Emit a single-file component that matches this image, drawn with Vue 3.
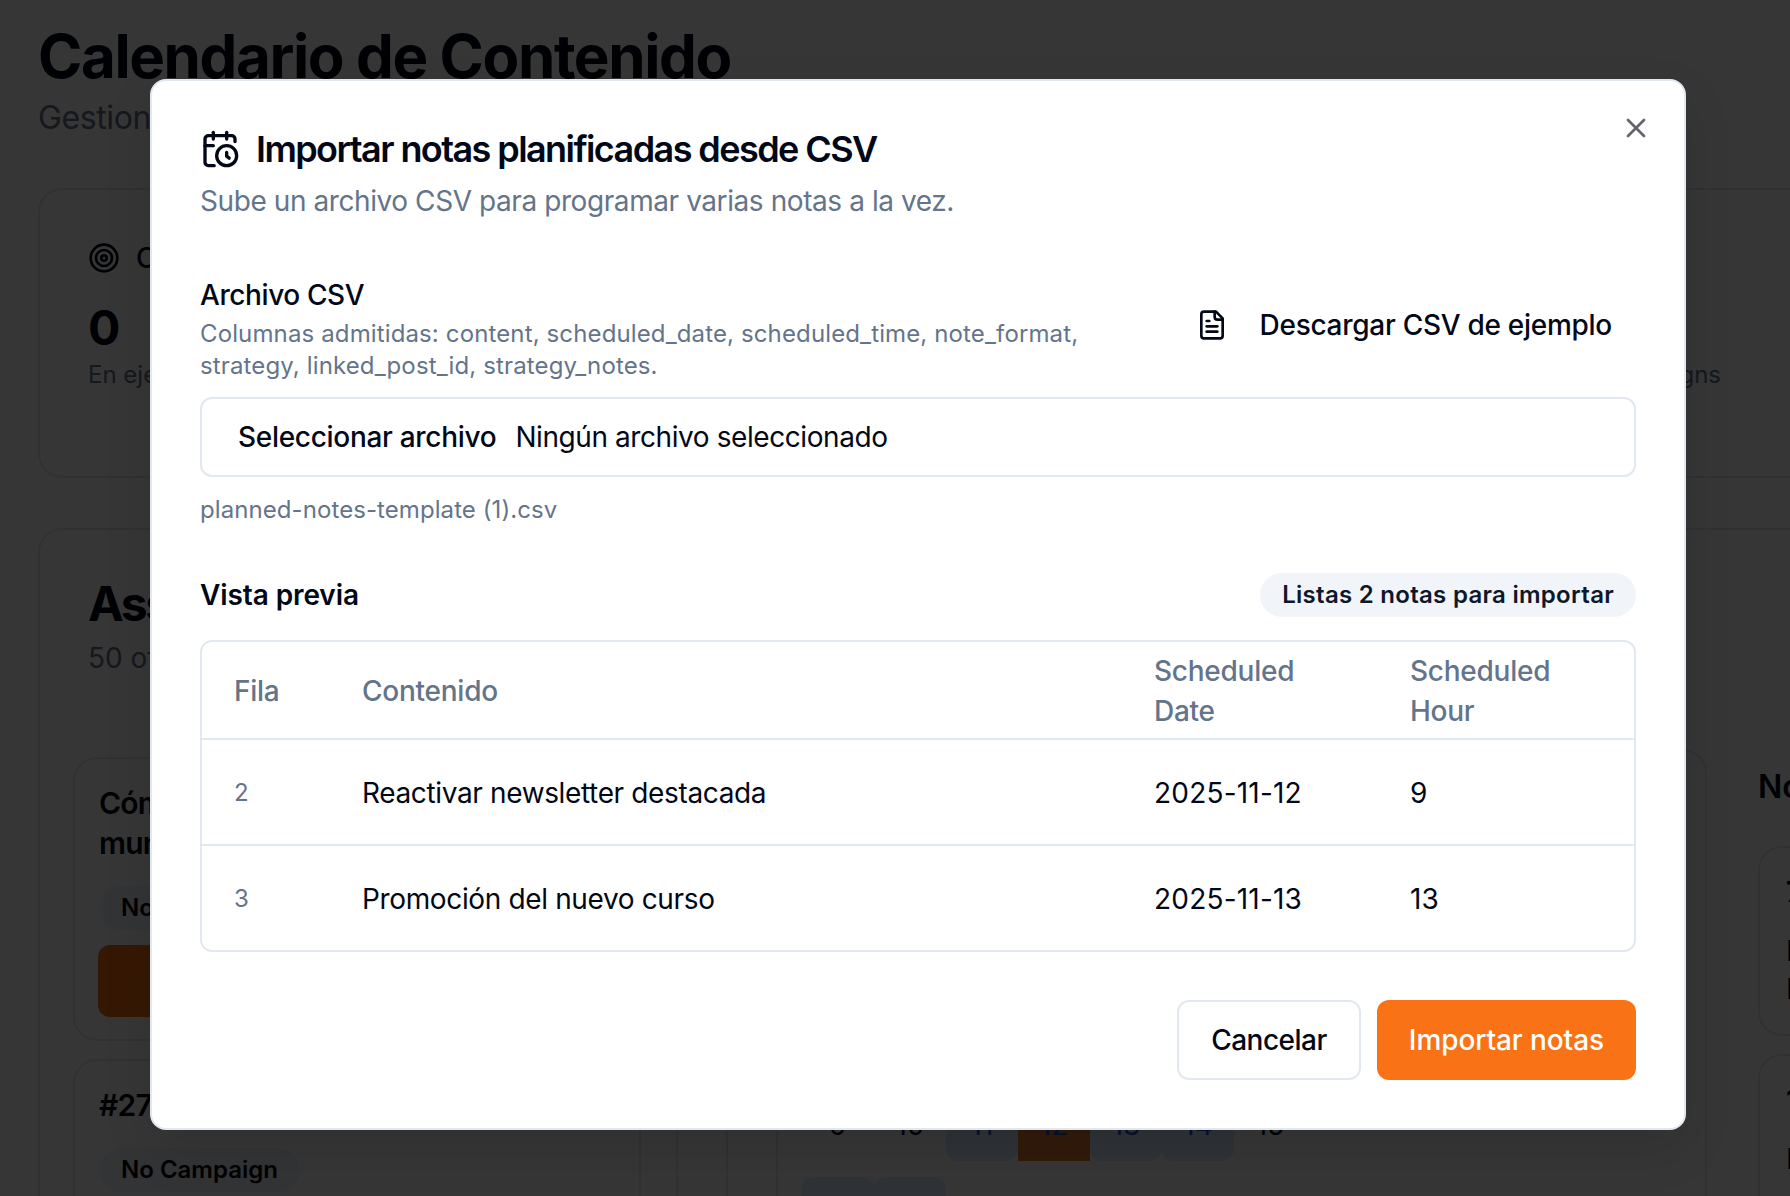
<template>
<div class="page">
  <main class="bg">
    <h1 class="page-title">Calendario de Contenido</h1>
    <p class="page-sub">Gestiona tu calendario de publicaciones y notas planificadas</p>

    <section class="stats">
      <div class="stat">
        <div class="stat-head">
          <svg class="stat-icon" viewBox="0 0 24 24" fill="none" stroke="currentColor" stroke-width="2">
            <circle cx="12" cy="12" r="10"/>
            <circle cx="12" cy="12" r="6"/>
            <circle cx="12" cy="12" r="2"/>
          </svg>
          <span>Campañas activas</span>
        </div>
        <div class="stat-num">0</div>
        <div class="stat-note">En ejecución</div>
      </div>
      <div class="stat stat-last">
        <div class="stat-note">Across all campaigns</div>
      </div>
    </section>

    <section class="assets">
      <h2 class="assets-title">Assignments</h2>
      <p class="assets-sub">50 of 50 posts</p>

      <div class="assets-body">
        <div class="post-list">
          <article class="post">
            <h3>Cómo escribir para un<br>mundo nuevo</h3>
            <span class="pill">No Campaign</span>
            <div class="post-btn"></div>
          </article>
          <article class="post">
            <h3>#27 Newsletter</h3>
            <span class="pill">No Campaign</span>
          </article>
        </div>

        <div class="rail">
          <div class="rail-inner">
            <div class="calendar">
              <div class="days">
                <div
                  v-for="d in days"
                  :key="d.n"
                  class="day"
                  :class="d.kind">{{d.n}}</div>
              </div>
            </div>
          </div>
        </div>

        <div class="notes">
          <h3 class="notes-title">Notas</h3>
          <div class="note">
            <b>7</b>
            <p>Hoy<br>Hora</p>
          </div>
          <div class="note">
            <b>1</b>
            <p>En</p>
          </div>
        </div>
      </div>
    </section>
  </main>

  <div class="overlay"></div>

  <div class="modal">
    <button class="close" aria-label="Cerrar">
      <svg viewBox="0 0 24 24" fill="none" stroke="currentColor" stroke-width="2" stroke-linecap="round" stroke-linejoin="round">
        <path d="M18 6 6 18"/>
        <path d="m6 6 12 12"/>
      </svg>
    </button>

    <header class="modal-head">
      <h2 class="modal-title">
        <svg class="title-icon" viewBox="0 0 24 24" fill="none" stroke="currentColor" stroke-width="2" stroke-linecap="round" stroke-linejoin="round">
          <path d="M21 7.5V6a2 2 0 0 0-2-2H5a2 2 0 0 0-2 2v14a2 2 0 0 0 2 2h3.5"/>
          <path d="M16 2v4"/>
          <path d="M8 2v4"/>
          <path d="M3 10h5"/>
          <path d="M17.5 17.5 16 16.3V14"/>
          <circle cx="16" cy="16" r="6"/>
        </svg>
        Importar notas planificadas desde CSV
      </h2>
      <p class="modal-sub">Sube un archivo CSV para programar varias notas a la vez.</p>
    </header>

    <div class="file-row">
      <div class="file-info">
        <label class="file-label">Archivo CSV</label>
        <p class="file-help">Columnas admitidas: content, scheduled_date, scheduled_time, note_format, strategy, linked_post_id, strategy_notes.</p>
      </div>
      <button class="download">
        <svg class="file-icon" viewBox="0 0 24 24" fill="none" stroke="currentColor" stroke-width="2" stroke-linecap="round" stroke-linejoin="round">
          <path d="M15 2H6a2 2 0 0 0-2 2v16a2 2 0 0 0 2 2h12a2 2 0 0 0 2-2V7Z"/>
          <path d="M14 2v4a2 2 0 0 0 2 2h4"/>
          <path d="M10 9H8"/>
          <path d="M16 13H8"/>
          <path d="M16 17H8"/>
        </svg>
        Descargar CSV de ejemplo
      </button>
    </div>

    <div class="file-input">
      <span class="file-btn">Seleccionar archivo</span>
      <span class="file-none">Ningún archivo seleccionado</span>
    </div>
    <p class="file-name">planned-notes-template (1).csv</p>

    <div class="preview-head">
      <h3>Vista previa</h3>
      <span class="badge">Listas 2 notas para importar</span>
    </div>

    <div class="table-wrap">
      <table>
        <colgroup>
          <col style="width: 128px">
          <col>
          <col style="width: 256px">
          <col style="width: 256px">
        </colgroup>
        <thead>
          <tr>
            <th>Fila</th>
            <th>Contenido</th>
            <th>Scheduled Date</th>
            <th>Scheduled Hour</th>
          </tr>
        </thead>
        <tbody>
          <tr v-for="r in rows" :key="r.row">
            <td class="row-num">{{r.row}}</td>
            <td class="row-text">{{r.content}}</td>
            <td>{{r.date}}</td>
            <td>{{r.hour}}</td>
          </tr>
        </tbody>
      </table>
    </div>

    <footer class="modal-foot">
      <button class="btn btn-outline">Cancelar</button>
      <button class="btn btn-primary">Importar notas</button>
    </footer>
  </div>
</div>
</template>

<script setup>
const rows = [
  {row: 2, content: "Reactivar newsletter destacada", date: "2025-11-12", hour: 9},
  {row: 3, content: "Promoción del nuevo curso", date: "2025-11-13", hour: 13},
];

const days = [
  {n: 9}, {n: 10}, {n: 11, kind: "planned"}, {n: 12, kind: "today"},
  {n: 13, kind: "planned"}, {n: 14, kind: "planned"}, {n: 15},
  {n: 16, kind: "planned"}, {n: 17, kind: "planned"}, {n: 18}, {n: 19},
  {n: 20}, {n: 21}, {n: 22},
];
</script>

<style>
html, body {
  margin: 0;
  background: #fff;
  overflow: hidden;
}
</style>

<style scoped>
.page {
  position: relative;
  width: 1790px;
  height: 1196px;
  overflow: hidden;
  font-family: Inter, "Liberation Sans", sans-serif;
  color: #020817;
}

/* page behind the dialog */
.bg {
  padding: 20px 0 0 38px;
  width: 1900px;
  box-sizing: border-box;
}

.page-title {
  margin: 0;
  font-size: 60px;
  line-height: 72px;
  font-weight: 700;
  letter-spacing: -1.4px;
}

.page-sub {
  margin: 2px 0 0;
  font-size: 32px;
  line-height: 48px;
  color: #64748b;
  letter-spacing: -0.4px;
}

.stats {
  margin-top: 46px;
  height: 290px;
  box-sizing: border-box;
  border: 2px solid #e2e8f0;
  border-radius: 24px;
  padding: 48px 175px 0 48px;
  display: flex;
  justify-content: space-between;
  width: 1860px;
}

.stat-head {
  display: flex;
  align-items: center;
  gap: 16px;
  font-size: 28px;
  font-weight: 500;
  height: 40px;
}

.stat-icon {
  width: 32px;
  height: 32px;
}

.stat-num {
  margin-top: 22px;
  font-size: 48px;
  line-height: 56px;
  font-weight: 700;
}

.stat-note {
  margin-top: 3px;
  font-size: 24px;
  line-height: 32px;
  color: #64748b;
}

.stat-last {
  padding-top: 118px;
}

.assets {
  margin-top: 50px;
  width: 1860px;
  height: 800px;
  box-sizing: border-box;
  border: 2px solid #e2e8f0;
  border-radius: 24px;
  padding: 46px 0 0 48px;
}

.assets-title {
  margin: 0;
  font-size: 48px;
  line-height: 56px;
  font-weight: 700;
  letter-spacing: -2.5px;
}

.assets-sub {
  margin: 6px 0 0;
  font-size: 28px;
  line-height: 40px;
  color: #64748b;
}

.assets-body {
  display: flex;
  margin: 71px 0 0 -15px;
  align-items: flex-start;
}

.post-list {
  width: 568px;
  flex: none;
  display: flex;
  flex-direction: column;
  gap: 18px;
  padding-top: 8px;
}

.post {
  box-sizing: border-box;
  border: 2px solid #e2e8f0;
  border-radius: 24px;
  padding: 24px;
  height: 284px;
}

.post h3 {
  margin: 0 0 23px;
  font-size: 30px;
  line-height: 40px;
  font-weight: 600;
  letter-spacing: -0.8px;
}

.pill {
  display: inline-block;
  padding: 4px 22px;
  line-height: 36px;
  font-size: 24px;
  font-weight: 600;
  background: #f1f5f9;
  border-radius: 22px;
}

.post-btn {
  margin: 15px 0 0 -1px;
  height: 72px;
  background: #f97316;
  border-radius: 12px;
}

.rail {
  margin-left: 35px;
  border-left: 2px solid #e2e8f0;
  padding-left: 48px;
  flex: none;
}

.rail-inner {
  border-left: 2px solid #e2e8f0;
  padding-left: 48px;
}

.calendar {
  box-sizing: border-box;
  width: 931px;
  height: 500px;
  border: 2px solid #e2e8f0;
  border-bottom: none;
  border-radius: 24px 24px 0 0;
  padding: 338px 0 0 24px;
}

.days {
  display: grid;
  grid-template-columns: repeat(7, 72px);
  grid-auto-rows: 72px;
  row-gap: 16px;
}

.day {
  display: flex;
  align-items: center;
  justify-content: center;
  font-size: 28px;
}

.planned {
  background: #dbeafe;
  color: #1d4ed8;
  border-radius: 12px;
}

.today {
  background: #e57a33;
  color: #1d4ed8;
}

.notes {
  margin-left: 51px;
  flex: none;
  width: 400px;
}

.notes-title {
  margin: 24px 0 45px;
  font-size: 32px;
  line-height: 28px;
  font-weight: 600;
}

.note {
  box-sizing: border-box;
  border: 2px solid #e2e8f0;
  border-radius: 24px;
  height: 190px;
  padding: 26px;
  margin-bottom: 18px;
  font-size: 28px;
}

.note b {
  display: block;
  line-height: 36px;
}

.note p {
  margin: 22px 0 0;
  line-height: 38px;
}

.overlay {
  position: absolute;
  inset: 0;
  background: rgba(0, 0, 0, 0.79);
}

/* dialog */
.modal {
  position: absolute;
  left: 150px;
  top: 79px;
  width: 1536px;
  box-sizing: border-box;
  background: #fff;
  border: 2px solid #e2e8f0;
  border-radius: 16px;
  padding: 48px;
  box-shadow: 0 20px 50px rgba(0, 0, 0, 0.1);
}

.close {
  position: absolute;
  top: 31px;
  right: 32px;
  width: 32px;
  height: 32px;
  padding: 0;
  border: none;
  background: none;
  color: #64646e;
}

.close svg {
  display: block;
  width: 32px;
  height: 32px;
}

.modal-title {
  margin: 0;
  display: flex;
  align-items: center;
  gap: 16px;
  font-size: 36px;
  line-height: 40px;
  font-weight: 600;
  letter-spacing: -1.58px;
}

.title-icon {
  width: 40px;
  height: 40px;
  flex: none;
}

.modal-sub {
  margin: 12px 0 0;
  font-size: 28px;
  line-height: 40px;
  color: #64748b;
  letter-spacing: -0.42px;
}

.file-row {
  margin-top: 60px;
  display: flex;
  justify-content: space-between;
  align-items: flex-start;
}

.file-info {
  width: 900px;
}

.file-label {
  display: block;
  font-size: 28px;
  line-height: 28px;
  font-weight: 500;
  letter-spacing: -0.4px;
}

.file-help {
  margin: 9px 0 0;
  font-size: 24px;
  line-height: 32px;
  color: #64748b;
  letter-spacing: 0.13px;
}

.download {
  display: flex;
  align-items: center;
  gap: 32px;
  height: 80px;
  margin-top: 4px;
  padding: 0 24px;
  border: none;
  background: none;
  color: #020817;
  font: 500 28px/40px Inter, "Liberation Sans", sans-serif;
  letter-spacing: -0.28px;
}

.file-icon {
  width: 32px;
  height: 32px;
}

.file-input {
  margin-top: 15px;
  height: 80px;
  box-sizing: border-box;
  display: flex;
  align-items: center;
  gap: 19px;
  padding: 0 36px;
  border: 2px solid #e2e8f0;
  border-radius: 12px;
  font-size: 28px;
}

.file-btn {
  font-weight: 500;
  letter-spacing: -0.3px;
}

.file-none {
  letter-spacing: -0.42px;
}

.file-name {
  margin: 17px 0 0;
  font-size: 24px;
  line-height: 32px;
  color: #64748b;
  letter-spacing: 0.08px;
}

.preview-head {
  margin-top: 47px;
  display: flex;
  justify-content: space-between;
  align-items: center;
}

.preview-head h3 {
  margin: 0;
  font-size: 28px;
  line-height: 40px;
  font-weight: 600;
  letter-spacing: -0.1px;
}

.badge {
  box-sizing: border-box;
  height: 44px;
  padding: 0 22px;
  border-radius: 22px;
  background: #f1f5f9;
  color: #0f172a;
  font-size: 24px;
  line-height: 44px;
  font-weight: 600;
  letter-spacing: 0.28px;
}

.table-wrap {
  margin-top: 23px;
  border: 2px solid #e2e8f0;
  border-radius: 12px;
  overflow: hidden;
}

table {
  width: 100%;
  border-collapse: collapse;
  table-layout: fixed;
}

th {
  padding: 9px 32px 7px;
  text-align: left;
  font-size: 28px;
  line-height: 40px;
  font-weight: 500;
  color: #64748b;
  border-bottom: 2px solid #e2e8f0;
  letter-spacing: -0.25px;
}

td {
  padding: 33px 32px 31px;
  font-size: 28px;
  line-height: 40px;
  letter-spacing: 0.2px;
}

tbody tr + tr td {
  border-top: 2px solid #e2e8f0;
}

.row-text {
  letter-spacing: -0.36px;
}

.row-num {
  font-size: 24px;
  color: #64748b;
}

.modal-foot {
  margin-top: 48px;
  display: flex;
  justify-content: flex-end;
  gap: 16px;
}

.btn {
  height: 80px;
  box-sizing: border-box;
  padding: 0 32px;
  border-radius: 12px;
  font: 500 28px/40px Inter, "Liberation Sans", sans-serif;
}

.btn-outline {
  background: #fff;
  color: #020817;
  border: 2px solid #e2e8f0;
  letter-spacing: -0.5px;
}

.btn-primary {
  background: #f97316;
  color: #fff;
  border: none;
  letter-spacing: -0.08px;
}
</style>
